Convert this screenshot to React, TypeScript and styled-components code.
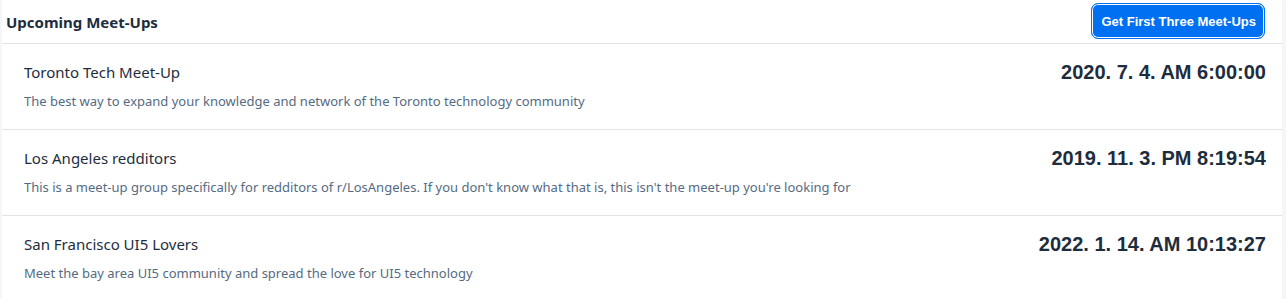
import React from "react";
import styled, { createGlobalStyle } from "styled-components";

const Global = createGlobalStyle`
  html, body { margin: 0; padding: 0; background: #f5f6f7; }
  body { padding-left: 2px; font-family: "Noto Sans", "Liberation Sans", sans-serif; }
`;

const Panel = styled.div`
  width: 1280px;
  background: #ffffff;
`;

const Header = styled.div`
  height: 43px;
  display: flex;
  align-items: center;
  justify-content: space-between;
  padding: 0 17px 0 4px;
  border-bottom: 1px solid #e5e5e5;
`;

const Title = styled.h2`
  margin: 0;
  font-size: 15px;
  font-weight: 700;
  color: #1d2d3e;
`;

const Button = styled.button`
  height: 36px;
  margin-top: -1px;
  padding: 0 8px 0 9px;
  border-radius: 7px;
  border: 1px solid #0070f2;
  box-shadow: inset 0 0 0 1px #ffffff;
  background: #0070f2;
  color: #ffffff;
  font-family: "Liberation Sans", Arial, sans-serif;
  font-size: 13px;
  font-weight: 700;
  cursor: pointer;
`;

const Row = styled.div`
  display: flex;
  justify-content: space-between;
  align-items: flex-start;
  padding: 19px 16px 19px 22px;
  border-bottom: 1px solid #e5e5e5;
`;

const Info = styled.div`
  display: flex;
  flex-direction: column;
  gap: 11px;
`;

const Name = styled.div`
  font-size: 15px;
  line-height: 18px;
  color: #1d2d3e;
`;

const Desc = styled.div`
  font-size: 13px;
  line-height: 18px;
  color: #556b82;
`;

const DateText = styled.div`
  font-family: "Liberation Sans", Arial, sans-serif;
  font-size: 20px;
  line-height: 18px;
  font-weight: 700;
  color: #1d2d3e;
`;

const meetups = [
  {
    name: "Toronto Tech Meet-Up",
    desc: "The best way to expand your knowledge and network of the Toronto technology community",
    date: "2020. 7. 4. AM 6:00:00",
  },
  {
    name: "Los Angeles redditors",
    desc: "This is a meet-up group specifically for redditors of r/LosAngeles. If you don't know what that is, this isn't the meet-up you're looking for",
    date: "2019. 11. 3. PM 8:19:54",
  },
  {
    name: "San Francisco UI5 Lovers",
    desc: "Meet the bay area UI5 community and spread the love for UI5 technology",
    date: "2022. 1. 14. AM 10:13:27",
  },
];

export default function App() {
  return (
    <>
      <Global />
      <Panel>
        <Header>
          <Title>Upcoming Meet-Ups</Title>
          <Button>Get First Three Meet-Ups</Button>
        </Header>
        {meetups.map((m) => (
          <Row key={m.name}>
            <Info>
              <Name>{m.name}</Name>
              <Desc>{m.desc}</Desc>
            </Info>
            <DateText>{m.date}</DateText>
          </Row>
        ))}
      </Panel>
    </>
  );
}
